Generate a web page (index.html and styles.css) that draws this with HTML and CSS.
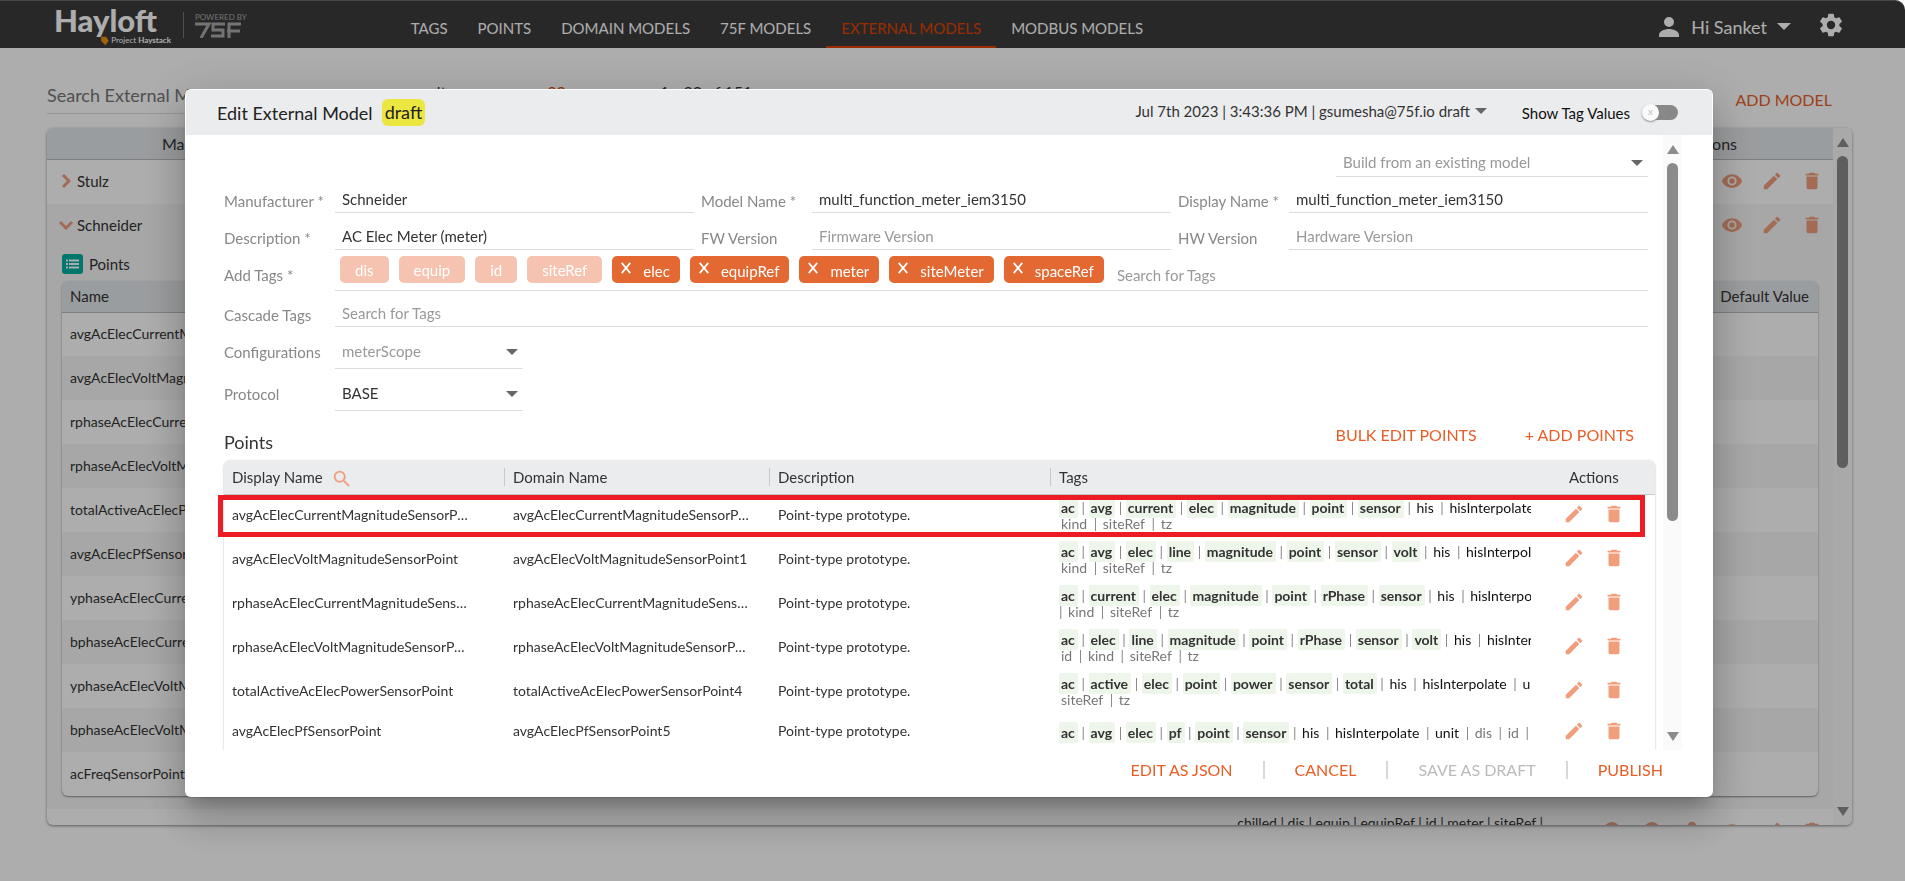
FILE: index.html
```html
<!DOCTYPE html>
<html lang="en">

<head>
  <meta charset="UTF-8">
  <meta name="viewport" content="width=device-width, initial-scale=1.0">
  <title>Hayloft</title>

  <link rel="stylesheet" href="styles.css">
</head>

<body>
  <svg class="sprite">
    <symbol id="edit" viewBox="0 0 24 24"><path d="M3 17.25V21h3.75L17.81 9.94l-3.75-3.75L3 17.25zM20.71 7.04a1 1 0 0 0 0-1.41l-2.34-2.34a1 1 0 0 0-1.41 0l-1.83 1.83 3.75 3.75 1.83-1.83z"/></symbol>
    <symbol id="delete" viewBox="0 0 24 24"><path d="M6 19c0 1.1.9 2 2 2h8c1.1 0 2-.9 2-2V7H6v12zM19 4h-3.5l-1-1h-5l-1 1H5v2h14V4z"/></symbol>
    <symbol id="eye" viewBox="0 0 24 24"><path d="M12 4.5C7 4.5 2.73 7.61 1 12c1.73 4.39 6 7.5 11 7.5s9.27-3.11 11-7.5c-1.73-4.39-6-7.5-11-7.5zM12 17a5 5 0 1 1 0-10 5 5 0 0 1 0 10zm0-8a3 3 0 1 0 0 6 3 3 0 0 0 0-6z"/></symbol>
    <symbol id="person" viewBox="0 0 24 24"><path d="M12 12a5 5 0 1 0 0-10 5 5 0 0 0 0 10zM2 22h20v-2c0-4-6-6-10-6S2 16 2 20z"/></symbol>
    <symbol id="gear" viewBox="0 0 24 24"><path d="M19.14 12.94c.04-.3.06-.61.06-.94s-.02-.64-.07-.94l2.03-1.58a.49.49 0 0 0 .12-.61l-1.92-3.32a.49.49 0 0 0-.59-.22l-2.39.96c-.5-.38-1.03-.7-1.62-.94l-.36-2.54a.48.48 0 0 0-.48-.41h-3.84a.47.47 0 0 0-.47.41l-.36 2.54c-.59.24-1.13.57-1.62.94l-2.39-.96a.48.48 0 0 0-.59.22L2.74 8.87a.47.47 0 0 0 .12.61l2.03 1.58c-.05.3-.09.63-.09.94s.02.64.07.94l-2.03 1.58a.49.49 0 0 0-.12.61l1.92 3.32c.12.22.37.29.59.22l2.39-.96c.5.38 1.03.7 1.62.94l.36 2.54c.05.24.24.41.48.41h3.84c.24 0 .44-.17.47-.41l.36-2.54c.59-.24 1.13-.56 1.62-.94l2.39.96c.22.08.47 0 .59-.22l1.92-3.32a.47.47 0 0 0-.12-.61l-2.01-1.58zM12 15.6a3.6 3.6 0 1 1 0-7.2 3.6 3.6 0 0 1 0 7.2z"/></symbol>
    <symbol id="search" viewBox="0 0 24 24"><path d="M15.5 14h-.79l-.28-.27A6.47 6.47 0 0 0 16 9.5 6.5 6.5 0 1 0 9.5 16c1.61 0 3.09-.59 4.23-1.57l.27.28v.79l5 4.99L20.49 19l-4.99-5zm-6 0a4.5 4.5 0 1 1 0-9 4.5 4.5 0 0 1 0 9z"/></symbol>
    <symbol id="chevron" viewBox="0 0 10 14"><path d="M2 1l6 6-6 6" fill="none" stroke="currentColor" stroke-width="3"/></symbol>
    <symbol id="close" viewBox="0 0 14 14"><path d="M2 1l10 12M12 1L2 13" fill="none" stroke="currentColor" stroke-width="2"/></symbol>
  </svg>

  <div class="page">
    <header class="topbar">
      <a class="logo" href="#">
        <span class="logo_name">Hayloft</span>
        <span class="logo_sub">
          <svg viewBox="0 0 10 12"><path d="M1 1l6 0 3 5-4 5-5-5z"/></svg>
          <span>Project <b>Haystack</b></span>
        </span>
      </a>
      <div class="powered">
        <span>POWERED BY</span>
        <svg viewBox="0 0 46 16"><path d="M0 2H14L6 16M30 2H18V8H28V14H16M46 2H34V16M32 9H45"/></svg>
      </div>
      <nav class="nav">
        <a href="#">TAGS</a>
        <a href="#">POINTS</a>
        <a href="#">DOMAIN MODELS</a>
        <a href="#">75F MODELS</a>
        <a class="active" href="#">EXTERNAL MODELS</a>
        <a href="#">MODBUS MODELS</a>
      </nav>
      <button class="user" type="button">
        <svg><use href="#person"/></svg>
        Hi Sanket
        <i class="arrow"></i>
      </button>
      <button class="settings" type="button" aria-label="Settings"><svg><use href="#gear"/></svg></button>
    </header>

    <div class="toolbar">
      <input class="search_model" type="text" aria-label="Search" placeholder="Search External Models">
      <p class="results">results <b>20</b> 1 - 20 of 151</p>
      <button class="link_btn" type="button">ADD MODEL</button>
    </div>

    <div class="models">
      <div class="models_list">
        <div class="models_head">
          <span>Manufacturer</span>
          <span>Actions</span>
        </div>
        <div class="model_row">
          <svg class="chevron"><use href="#chevron"/></svg>
          <span>Stulz</span>
          <svg class="icon"><use href="#eye"/></svg>
          <svg class="icon"><use href="#edit"/></svg>
          <svg class="icon"><use href="#delete"/></svg>
        </div>
        <div class="model_open">
          <div class="model_row">
            <svg class="chevron opened"><use href="#chevron"/></svg>
            <span>Schneider</span>
            <svg class="icon"><use href="#eye"/></svg>
            <svg class="icon"><use href="#edit"/></svg>
            <svg class="icon"><use href="#delete"/></svg>
          </div>
          <div class="points_title">
            <svg viewBox="0 0 21 20"><rect width="21" height="20" rx="3"/><path d="M4 6.500h2M4 10h2M4 13.500h2M7 6.500h10M7 10h10M7 13.500h10"/></svg>
            Points
          </div>
          <table class="inner">
            <thead>
              <tr><th>Name</th><th>Default Value</th></tr>
            </thead>
            <tbody>
              <tr><td>avgAcElecCurrentMagnitudeSensorPoint</td><td></td></tr>
              <tr><td>avgAcElecVoltMagnitudeSensorPoint</td><td></td></tr>
              <tr><td>rphaseAcElecCurrentMagnitudeSensorPoint</td><td></td></tr>
              <tr><td>rphaseAcElecVoltMagnitudeSensorPoint</td><td></td></tr>
              <tr><td>totalActiveAcElecPowerSensorPoint</td><td></td></tr>
              <tr><td>avgAcElecPfSensorPoint</td><td></td></tr>
              <tr><td>yphaseAcElecCurrentMagnitudeSensorPoint</td><td></td></tr>
              <tr><td>bphaseAcElecCurrentMagnitudeSensorPoint</td><td></td></tr>
              <tr><td>yphaseAcElecVoltMagnitudeSensorPoint</td><td></td></tr>
              <tr><td>bphaseAcElecVoltMagnitudeSensorPoint</td><td></td></tr>
              <tr><td>acFreqSensorPoint</td><td></td></tr>
            </tbody>
          </table>
        </div>
        <div class="model_next">
          <span>chilled | dis | equip | equipRef | id | meter | siteRef |</span>
          <svg class="icon"><circle cx="11" cy="11" r="9"/></svg>
          <svg class="icon"><circle cx="11" cy="11" r="9"/></svg>
          <svg class="icon"><use href="#person"/></svg>
          <svg class="icon"><use href="#eye"/></svg>
          <svg class="icon"><use href="#edit"/></svg>
          <svg class="icon"><use href="#delete"/></svg>
        </div>
      </div>
      <div class="scrollbar models_scroll"><i class="up"></i><i class="thumb"></i><i class="down"></i></div>
    </div>
  </div>

  <div class="overlay">
    <div class="dialog" role="dialog" aria-labelledby="dialog_title">
      <div class="dialog_head">
        <h2 id="dialog_title">Edit External Model</h2>
        <span class="draft">draft</span>
        <button class="version" type="button">Jul 7th 2023 | 3:43:36 PM | gsumesha@75f.io draft <i class="arrow"></i></button>
        <label class="toggle">Show Tag Values <input type="checkbox"></label>
      </div>

      <div class="dialog_main">
        <div class="dialog_body">
          <div class="form">
            <div class="select build">
              <select aria-label="Build from an existing model"><option>Build from an existing model</option></select>
            </div>
            <div class="fields">
              <label for="manufacturer">Manufacturer *</label>
              <input id="manufacturer" type="text" value="Schneider">
              <label for="model_name">Model Name *</label>
              <input id="model_name" type="text" value="multi_function_meter_iem3150">
              <label for="display_name">Display Name *</label>
              <input id="display_name" type="text" value="multi_function_meter_iem3150">
              <label for="description">Description *</label>
              <input id="description" type="text" value="AC Elec Meter (meter)">
              <label for="fw">FW Version</label>
              <input id="fw" type="text" placeholder="Firmware Version">
              <label for="hw">HW Version</label>
              <input id="hw" type="text" placeholder="Hardware Version">
            </div>
            <div class="field tags_field">
              <label for="add_tags">Add Tags *</label>
              <div class="chips">
                <span class="chip locked">dis</span>
                <span class="chip locked">equip</span>
                <span class="chip locked">id</span>
                <span class="chip locked">siteRef</span>
                <span class="chip"><button type="button" aria-label="Remove elec"><svg><use href="#close"/></svg></button>elec</span>
                <span class="chip"><button type="button" aria-label="Remove equipRef"><svg><use href="#close"/></svg></button>equipRef</span>
                <span class="chip"><button type="button" aria-label="Remove meter"><svg><use href="#close"/></svg></button>meter</span>
                <span class="chip"><button type="button" aria-label="Remove siteMeter"><svg><use href="#close"/></svg></button>siteMeter</span>
                <span class="chip"><button type="button" aria-label="Remove spaceRef"><svg><use href="#close"/></svg></button>spaceRef</span>
                <input id="add_tags" type="text" placeholder="Search for Tags">
              </div>
            </div>
            <div class="field">
              <label for="cascade">Cascade Tags</label>
              <input id="cascade" type="text" placeholder="Search for Tags">
            </div>
            <div class="field select_field">
              <label for="config">Configurations</label>
              <div class="select muted"><select id="config"><option>meterScope</option></select></div>
            </div>
            <div class="field select_field">
              <label for="protocol">Protocol</label>
              <div class="select"><select id="protocol"><option>BASE</option></select></div>
            </div>
          </div>

          <div class="points_bar">
            <h3>Points</h3>
            <button class="link_btn" type="button">BULK EDIT POINTS</button>
            <button class="link_btn" type="button">+ ADD POINTS</button>
          </div>

          <div class="points">
            <table>
              <thead>
                <tr>
                  <th class="col_name">Display Name <svg><use href="#search"/></svg></th>
                  <th class="col_domain">Domain Name</th>
                  <th class="col_desc">Description</th>
                  <th>Tags</th>
                  <th class="col_actions">Actions</th>
                </tr>
              </thead>
              <tbody id="points"></tbody>
            </table>
            <div class="highlight"></div>
          </div>
        </div>
        <div class="scrollbar"><i class="up"></i><i class="thumb"></i><i class="down"></i></div>
      </div>

      <div class="dialog_foot">
        <button class="link_btn" type="button">EDIT AS JSON</button>
        <button class="link_btn" type="button">CANCEL</button>
        <button class="link_btn" type="button" disabled>SAVE AS DRAFT</button>
        <button class="link_btn" type="button">PUBLISH</button>
      </div>
    </div>
  </div>

  <script src="script.js"></script>
</body>

</html>
```

FILE: styles.css
```css
* {
  box-sizing: border-box;
  margin: 0;
  padding: 0;
}

body {
  background-color: #ffffff;
  color: #333333;
  font-family: Lato, sans-serif;
  font-size: 16px;
  height: 100vh;
  overflow: hidden;
}

button,
input,
select {
  background: none;
  border: 0;
  color: inherit;
  font: inherit;
  outline: none;
}

a {
  color: inherit;
  text-decoration: none;
}

table {
  border-collapse: collapse;
  table-layout: fixed;
  width: 100%;
}

th {
  font-size: 15px;
  font-weight: 400;
  text-align: left;
}

.sprite {
  display: none;
}

.icon {
  fill: #f19e7c;
  flex: none;
  height: 22px;
  width: 22px;
}

.arrow {
  border: 6px solid transparent;
  border-bottom: 0;
  border-top-color: currentColor;
  display: inline-block;
}

.link_btn {
  color: #e95e26;
  line-height: 20px;
}

.link_btn:disabled {
  color: #bbbbbb;
}

/* top bar */
.topbar {
  align-items: center;
  background-color: #3c3c3c;
  border-top: 1px solid #666666;
  border-top-right-radius: 10px;
  color: #ffffff;
  display: flex;
  height: 48px;
  padding: 0 60px 0 54px;
}

.logo {
  flex: none;
  width: 129px;
}

.logo_name {
  display: block;
  font-size: 31px;
  font-weight: 900;
  line-height: 32px;
}

.logo_sub {
  align-items: center;
  display: flex;
  font-size: 8px;
  gap: 2px;
  justify-content: flex-end;
  line-height: 9px;
  padding-right: 12px;
}

.logo_sub svg {
  fill: #e8920c;
  height: 10px;
  width: 9px;
}

.powered {
  border-left: 1px solid #777777;
  color: #aaaaaa;
  flex: none;
  font-size: 8px;
  line-height: 8px;
  padding-left: 11px;
  padding-top: 1px;
}

.powered svg {
  display: block;
  fill: none;
  height: 16px;
  margin-top: 1px;
  stroke: #aaaaaa;
  stroke-width: 3;
  width: 46px;
}

.nav {
  display: flex;
  font-size: 15px;
  height: 47px;
  margin-left: 149px;
}

.nav a {
  border-bottom: 2px solid transparent;
  line-height: 54px;
  padding: 0 15px;
}

.nav .active {
  border-color: #e24301;
  color: #e24301;
}

.user {
  align-items: center;
  display: flex;
  font-size: 18px;
  gap: 10px;
  margin-left: auto;
  padding-top: 4px;
}

.user svg {
  fill: currentColor;
  height: 24px;
  width: 24px;
}

.user .arrow {
  border-width: 7px;
  border-bottom: 0;
}

.settings {
  height: 28px;
  margin-left: 26px;
}

.settings svg {
  fill: #ffffff;
  height: 28px;
  width: 28px;
}

/* page behind the dialog */
.toolbar {
  align-items: flex-start;
  display: flex;
  height: 80px;
  padding: 34px 73px 0 47px;
}

.search_model {
  border-bottom: 1px solid #dddddd;
  font-size: 18px;
  height: 32px;
  padding-bottom: 6px;
  width: 300px;
}

.search_model::placeholder {
  color: #777777;
}

.results {
  flex: 1;
  margin-left: 60px;
}

.results b {
  color: #e24301;
  font-weight: 400;
  margin: 0 90px;
}

.toolbar .link_btn {
  margin-top: 8px;
}

.models {
  border-radius: 6px;
  box-shadow: 0 1px 3px #888888;
  display: flex;
  height: 697px;
  margin: 0 53px 0 47px;
  overflow: hidden;
}

.models_list {
  flex: 1;
}

.models_head {
  background-color: #e4e7ea;
  border-bottom: 1px solid #bbbbbb;
  display: flex;
  height: 32px;
  justify-content: space-between;
  line-height: 32px;
  padding: 0 96px 0 115px;
}

.model_row {
  align-items: center;
  display: flex;
  font-size: 15px;
  gap: 18px;
  height: 44px;
  padding: 0 10px 2px 14px;
}

.model_row span {
  flex: 1;
  margin-left: -12px;
}

.chevron {
  color: #f19e7c;
  height: 14px;
  width: 10px;
}

.chevron.opened {
  transform: rotate(90deg);
}

.model_open {
  background-color: #f7f7f7;
  padding: 0 15px 13px;
}

.model_open .model_row {
  margin: 0 -15px;
}

.points_title {
  align-items: center;
  display: flex;
  font-size: 15px;
  gap: 6px;
  height: 33px;
  padding-bottom: 2px;
}

.points_title svg {
  fill: #00b0a0;
  height: 20px;
  stroke: #ffffff;
  stroke-width: 2;
  width: 21px;
}

.points_title rect {
  stroke: none;
}

.inner {
  background-color: #ffffff;
  border-radius: 6px;
  box-shadow: 0 1px 2px #888888;
  overflow: hidden;
}

.inner th {
  background-color: #e4e7ea;
  border-bottom: 1px solid #bbbbbb;
  height: 31px;
  padding: 0 8px;
}

.inner th:last-child {
  padding-right: 9px;
  text-align: right;
}

.inner td {
  font-size: 14px;
  height: 44px;
  padding: 0 8px 2px;
}

.inner tbody tr:nth-child(even) {
  background-color: #f7f7f7;
}

.model_next {
  display: flex;
  font-size: 14px;
  gap: 18px;
  justify-content: flex-end;
  padding: 5px 10px 0 0;
}

.model_next span {
  margin-right: 40px;
}

.model_next .icon {
  margin-top: 6px;
}

/* scrollbars */
.scrollbar {
  align-items: center;
  background-color: #fafafa;
  display: flex;
  flex: none;
  flex-direction: column;
  padding: 10px 0 9px;
  width: 19px;
}

.up,
.down {
  border: 6px solid transparent;
}

.up {
  border-bottom: 9px solid #8b8b8b;
  border-top: 0;
}

.down {
  border-bottom: 0;
  border-top: 9px solid #8b8b8b;
  margin-top: auto;
}

.thumb {
  background-color: #8b8b8b;
  border-radius: 6px;
  height: 60%;
  margin-top: 9px;
  width: 11px;
}

.models_scroll .thumb {
  height: 46%;
}

/* dialog */
.overlay {
  background-color: rgba(0, 0, 0, 0.32);
  border-top-right-radius: 10px;
  inset: 0;
  padding: 89px 192px 84px 185px;
  position: fixed;
}

.dialog {
  background-color: #ffffff;
  border-radius: 6px;
  box-shadow: 0 11px 15px -7px rgba(0, 0, 0, 0.2), 0 24px 38px 3px rgba(0, 0, 0, 0.14), 0 9px 46px 8px rgba(0, 0, 0, 0.12);
  display: flex;
  flex-direction: column;
  height: 100%;
  overflow: hidden;
  padding: 1px;
}

.dialog_head {
  align-items: center;
  background-color: #ebecee;
  display: flex;
  flex: none;
  height: 45px;
  padding: 0 34px 0 31px;
}

.dialog_head h2 {
  color: #222222;
  font-size: 18px;
  font-weight: 400;
}

.draft {
  background-color: #ece640;
  border-radius: 6px;
  color: #222222;
  font-size: 18px;
  line-height: 27px;
  margin-left: 9px;
  padding: 0 3px;
}

.version {
  font-size: 15px;
  margin-left: auto;
  padding-bottom: 3px;
}

.version .arrow {
  color: #666666;
  margin: 0 0 3px 1px;
}

.toggle {
  align-items: center;
  color: #111111;
  display: flex;
  font-size: 15px;
  gap: 13px;
  margin-left: 35px;
}

.toggle input {
  appearance: none;
  background-color: #888888;
  border-radius: 8px;
  height: 15px;
  position: relative;
  width: 35px;
}

.toggle input::before {
  background-color: #fafafa;
  border-radius: 50%;
  box-shadow: 0 1px 2px #888888;
  color: #bbbbbb;
  content: "x";
  font-size: 10px;
  height: 17px;
  left: -1px;
  line-height: 15px;
  position: absolute;
  text-align: center;
  top: -1px;
  width: 17px;
}

.dialog_main {
  display: flex;
  flex: 1;
  min-height: 0;
  padding-right: 30px;
}

.dialog_body {
  flex: 1;
  overflow: hidden;
  padding: 14px 8px 0 38px;
}

.form {
  font-size: 15px;
  padding-right: 7px;
}

.form label {
  color: #888888;
  padding-top: 3px;
}

.form input,
.form select {
  color: #333333;
  height: 100%;
  padding: 0 7px;
  width: 100%;
}

.form input {
  border-bottom: 1px solid #dcdcdc;
}

.form input::placeholder {
  color: #999999;
  opacity: 1;
}

.select {
  align-items: center;
  border-bottom: 1px solid #dcdcdc;
  display: flex;
  height: 28px;
  width: 188px;
}

.select::after {
  border: 6px solid transparent;
  border-bottom: 0;
  border-top-color: #666666;
  content: "";
  margin-left: -17px;
  margin-right: 5px;
  pointer-events: none;
}

.select select {
  appearance: none;
  padding-bottom: 2px;
}

.form .build select,
.form .muted select {
  color: #999999;
}

.build {
  margin-left: auto;
  width: 312px;
}

.fields {
  display: grid;
  grid-auto-rows: 28px;
  grid-template-columns: 104px 1fr 104px 1fr 104px 1fr;
  column-gap: 7px;
  margin-top: 8px;
  row-gap: 9px;
}

.field {
  align-items: center;
  display: grid;
  grid-template-columns: 104px 1fr;
  column-gap: 7px;
  height: 28px;
  margin-top: 8px;
}

.fields label {
  align-self: center;
}

.select_field,
.select_field .select {
  height: 34px;
}

.form .select_field label {
  padding-top: 0;
}

.tags_field {
  height: 41px;
  margin-top: 0;
}

.form .tags_field label {
  padding-top: 8px;
}

.chips {
  align-items: center;
  border-bottom: 1px solid #dcdcdc;
  display: flex;
  gap: 10px;
  height: 41px;
  padding: 0 0 1px 5px;
}

.chips input {
  border: 0;
  flex: 1;
  padding: 10px 0 0 3px;
}

.chip {
  align-items: center;
  background-color: #e36832;
  border-radius: 5px;
  color: #ffffff;
  display: flex;
  flex: none;
  gap: 10px;
  height: 27px;
  padding: 2px 10px 0 7px;
}

.chip button {
  height: 14px;
  margin-bottom: 6px;
  width: 14px;
}

.chip svg {
  display: block;
  height: 12px;
  width: 14px;
}

.chip.locked {
  background-color: #f5c3af;
  padding: 1px 15px 0;
}

.points_bar {
  align-items: center;
  display: flex;
  gap: 48px;
  height: 50px;
  padding-right: 21px;
}

.points_bar .link_btn {
  padding-bottom: 2px;
}

.points_bar h3 {
  font-size: 18px;
  font-weight: 400;
  margin-right: auto;
  padding-top: 11px;
}

.points {
  border-radius: 6px 6px 0 0;
  box-shadow: 0 0 2px #aaaaaa;
  position: relative;
}

.points th {
  background-color: #ebecee;
  border-bottom: 1px solid #c8c8c8;
  height: 33px;
  padding-left: 8px;
}

.points th:first-child {
  border-top-left-radius: 6px;
}

.points th:last-child {
  border-top-right-radius: 6px;
}

.points th:nth-child(-n+3) {
  background-image: linear-gradient(#c8c8c8, #c8c8c8);
  background-position: right center;
  background-repeat: no-repeat;
  background-size: 1px 18px;
}

.points th svg {
  fill: #f19e7c;
  height: 22px;
  margin: -4px 0 -4px 4px;
  vertical-align: middle;
  width: 22px;
}

.col_name {
  width: 281px;
}

.col_domain {
  width: 265px;
}

.col_desc {
  width: 281px;
}

.col_actions {
  width: 124px;
}

.points .col_actions {
  padding-left: 38px;
}

.points td {
  font-size: 14px;
  height: 44px;
  overflow: hidden;
  padding: 0 8px 4px;
  text-overflow: ellipsis;
  white-space: nowrap;
}

.points tr.short td {
  height: 37px;
}

.points td:first-child {
  padding-right: 36px;
}

.points td:nth-child(2) {
  padding-right: 20px;
}

.points td.tags {
  color: #888888;
  line-height: 16px;
  padding-bottom: 0;
  padding-right: 0;
  text-overflow: clip;
}

.tags b {
  background-color: #eef5ea;
  border-radius: 2px;
  color: #333333;
  padding: 2px 3px 2px 2px;
}

.tags span {
  color: #111111;
  padding: 0 3px 0 2px;
}

.tags .marker {
  color: #777777;
}

.points td.actions {
  padding-left: 32px;
}

.actions button {
  height: 22px;
  margin-right: 14px;
  vertical-align: middle;
}

.highlight {
  border: 5px solid #ed1c24;
  height: 42px;
  left: -6px;
  position: absolute;
  right: 10px;
  top: 34px;
}

.dialog_foot {
  align-items: center;
  display: flex;
  flex: none;
  height: 46px;
  justify-content: flex-end;
  padding: 0 49px 6px 0;
}

.dialog_foot .link_btn + .link_btn {
  border-left: 2px solid #d8d8d8;
  line-height: 18px;
  margin-left: 30px;
  padding-left: 30px;
}
```

FILE: script.js
```js
const points = document.querySelector("#points");

// b: tags shown in bold, s: plain tags, m: grey tags on the second line
const rows = [
  { name: "avgAcElecCurrentMagnitudeSensorPoint", domain: "avgAcElecCurrentMagnitudeSensorPoint0", b: "ac avg current elec magnitude point sensor", s: "his hisInterpolate", m: "kind siteRef tz" },
  { name: "avgAcElecVoltMagnitudeSensorPoint", domain: "avgAcElecVoltMagnitudeSensorPoint1", b: "ac avg elec line magnitude point sensor volt", s: "his hisInterpolate", m: "kind siteRef tz" },
  { name: "rphaseAcElecCurrentMagnitudeSensorPoint", domain: "rphaseAcElecCurrentMagnitudeSensorPoint2", b: "ac current elec magnitude point rPhase sensor", s: "his hisInterpolate", m: "kind siteRef tz", lead: true },
  { name: "rphaseAcElecVoltMagnitudeSensorPoint", domain: "rphaseAcElecVoltMagnitudeSensorPoint3", b: "ac elec line magnitude point rPhase sensor volt", s: "his hisInterpolate", m: "id kind siteRef tz" },
  { name: "totalActiveAcElecPowerSensorPoint", domain: "totalActiveAcElecPowerSensorPoint4", b: "ac active elec point power sensor total", s: "his hisInterpolate unit", m: "siteRef tz" },
  { name: "avgAcElecPfSensorPoint", domain: "avgAcElecPfSensorPoint5", b: "ac avg elec pf point sensor", s: "his hisInterpolate unit", tail: "dis id kind" }
];

function wrap(list, open, close) {
  return list ? list.split(" ").map(tag => `${open}${tag}${close}`) : [];
}

for (const row of rows) {
  const first = [
    ...wrap(row.b, "<b>", "</b>"),
    ...wrap(row.s, "<span>", "</span>"),
    ...wrap(row.tail, '<span class="marker">', "</span>")
  ].join(" | ");
  const second = wrap(row.m, '<span class="marker">', "</span>").join(" | ");
  const tr = document.createElement("tr");
  if (!row.m) tr.className = "short";
  tr.innerHTML = `
    <td>${row.name}</td>
    <td>${row.domain}</td>
    <td>Point-type prototype.</td>
    <td class="tags">${first}${second ? "<br>" : ""}${row.lead ? "| " : ""}${second}</td>
    <td class="actions">
      <button type="button" aria-label="Edit"><svg class="icon"><use href="#edit"/></svg></button>
      <button type="button" aria-label="Delete"><svg class="icon"><use href="#delete"/></svg></button>
    </td>`;
  points.appendChild(tr);
}
```
